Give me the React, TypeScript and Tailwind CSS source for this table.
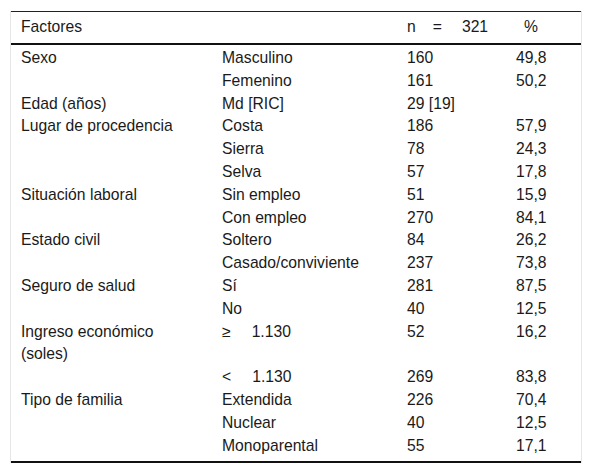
import React from "react";

type Row = { a?: React.ReactNode; b: React.ReactNode; n: string; p: string };

const rows: Row[] = [
  { a: "Sexo", b: "Masculino", n: "160", p: "49,8" },
  { b: "Femenino", n: "161", p: "50,2" },
  { a: "Edad (años)", b: "Md [RIC]", n: "29 [19]", p: "" },
  { a: "Lugar de procedencia", b: "Costa", n: "186", p: "57,9" },
  { b: "Sierra", n: "78", p: "24,3" },
  { b: "Selva", n: "57", p: "17,8" },
  { a: "Situación laboral", b: "Sin empleo", n: "51", p: "15,9" },
  { b: "Con empleo", n: "270", p: "84,1" },
  { a: "Estado civil", b: "Soltero", n: "84", p: "26,2" },
  { b: "Casado/conviviente", n: "237", p: "73,8" },
  { a: "Seguro de salud", b: "Sí", n: "281", p: "87,5" },
  { b: "No", n: "40", p: "12,5" },
  {
    a: (
      <>
        Ingreso económico
        <br />
        (soles)
      </>
    ),
    b: (
      <>
        ≥<span className="ml-[21px]">1.130</span>
      </>
    ),
    n: "52",
    p: "16,2",
  },
  {
    b: (
      <>
        &lt;<span className="ml-[21px]">1.130</span>
      </>
    ),
    n: "269",
    p: "83,8",
  },
  { a: "Tipo de familia", b: "Extendida", n: "226", p: "70,4" },
  { b: "Nuclear", n: "40", p: "12,5" },
  { b: "Monoparental", n: "55", p: "17,1" },
];

export default function App() {
  return (
    <div
      className="w-[592px] h-[474px] bg-white text-[#1a1a1a] text-[15.7px] leading-[22.8px]"
      style={{ fontFamily: '"Liberation Sans", Arial, sans-serif' }}
    >
      <div className="pt-[11px] px-[10px]">
        <div className="border-x border-[#e6e6e6]">
          <div className="border-t border-[#222]">
            <div className="grid grid-cols-[201px_185px_109px_75px] pt-[4.4px] pb-[3.8px] border-b-2 border-[#111]">
              <div className="pl-[10px]">Factores</div>
              <div className="pl-[10px]"></div>
              <div className="pl-[10px] whitespace-nowrap">
                n<span className="ml-[17px]">=</span>
                <span className="ml-[20px]">321</span>
              </div>
              <div className="pl-[10px]">
                <span className="ml-[8px]">%</span>
              </div>
            </div>
            <div className="grid grid-cols-[201px_185px_109px_75px] pt-[2px] pb-[3.6px] border-b-2 border-[#111]">
              {rows.map((r, i) => (
                <React.Fragment key={i}>
                  <div className="pl-[10px]">{r.a ?? ""}</div>
                  <div className="pl-[10px] whitespace-nowrap">{r.b}</div>
                  <div className="pl-[10px] whitespace-nowrap">{r.n}</div>
                  <div className="pl-[10px] whitespace-nowrap">{r.p}</div>
                </React.Fragment>
              ))}
            </div>
          </div>
        </div>
      </div>
    </div>
  );
}
